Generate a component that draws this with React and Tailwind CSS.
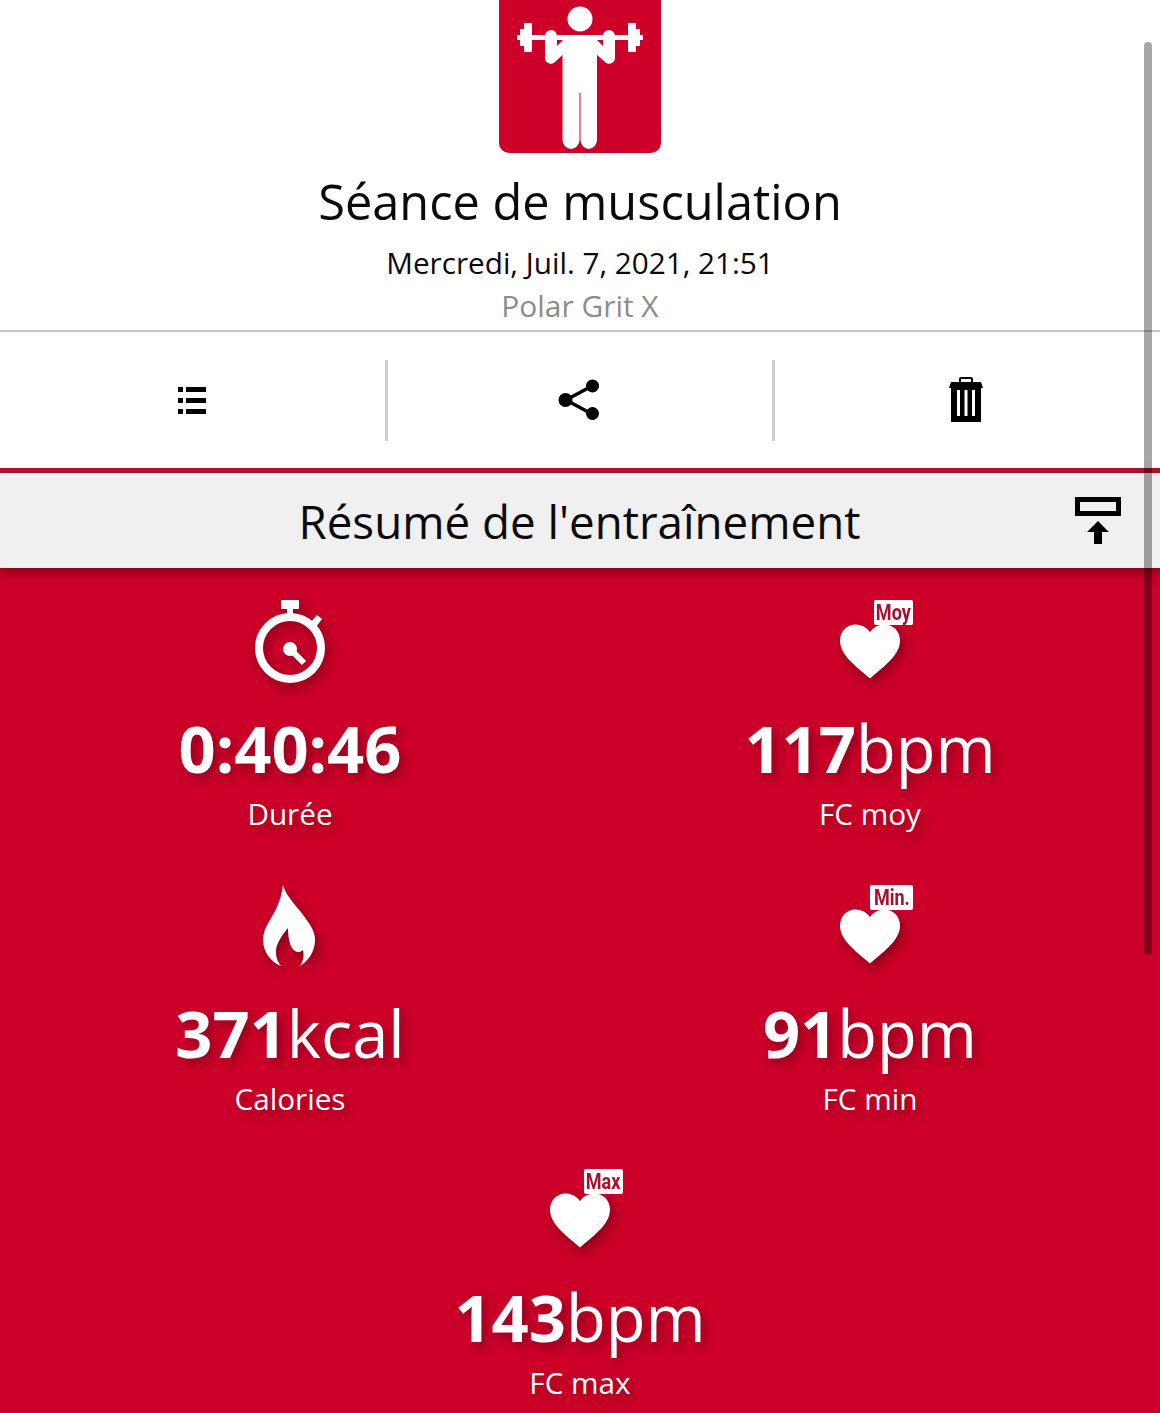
const FONT = "font-['Open_Sans',sans-serif]";

function LifterIcon() {
  return (
    <svg viewBox="0 0 162 153" className="block w-[162px] h-[153px]">
      <path
        d="M0 0H162V143a10 10 0 0 1-10 10H10a10 10 0 0 1-10-10Z"
        fill="#cc0029"
      />
      <g fill="#fff">
        <circle cx="81" cy="19" r="12.5" />
        <rect x="18" y="35" width="126" height="5" />
        <rect x="21" y="29" width="5" height="17" />
        <rect x="25" y="23" width="8" height="29" rx="1" />
        <rect x="136" y="29" width="5" height="17" />
        <rect x="129" y="23" width="8" height="29" rx="1" />
        <path d="M46 36a6 6 0 0 1 12 0V46L65 39H97L104 46V36a6 6 0 0 1 12 0V58a6 6 0 0 1-11 3L98 55V140a9 9 0 0 1-8.5 9 9 9 0 0 1-8-9V93H80.5V140a9 9 0 0 1-8.5 9 9 9 0 0 1-8.5-9V55L57 61a6 6 0 0 1-11-3Z" />
      </g>
    </svg>
  );
}

function ListIcon() {
  return (
    <svg viewBox="0 0 28 28" className="w-[28px] h-[28px] mr-[1px]">
      <path d="M0 0h5v5H0zM8 0h20v5H8zM0 11h5v5H0zM8 11h20v5H8zM0 22h5v5H0zM8 22h20v5H8z" fill="#000" />
    </svg>
  );
}

function ShareIcon() {
  return (
    <svg viewBox="0 0 42 42" className="w-[42px] h-[42px] mr-[2px] mb-[2px]">
      <path d="M8 21 34 7M8 21l26 14" stroke="#000" strokeWidth="3.5" fill="none" />
      <circle cx="7.5" cy="21" r="7" />
      <circle cx="34.5" cy="7" r="6.5" />
      <circle cx="34.5" cy="34.5" r="6.5" />
    </svg>
  );
}

function TrashIcon() {
  return (
    <svg viewBox="0 0 34 46" className="w-[34px] h-[46px] mb-[4px] mr-[3px]">
      <path
        fillRule="evenodd"
        d="M10 6V3a2 2 0 0 1 2-2h10a2 2 0 0 1 2 2v3h8l2 6H32v34H2V12H0l2-6ZM12 3v3h10V3ZM8 14v26h3V14Zm7.5 0v26h3V14Zm7.5 0v26h3V14Z"
        fill="#000"
      />
    </svg>
  );
}

function CollapseIcon() {
  return (
    <svg viewBox="0 0 46 47" className="w-[46px] h-[47px]">
      <rect x="2.5" y="2.5" width="41" height="14" fill="none" stroke="#000" strokeWidth="5" />
      <path d="M23 24 34 35H27V47H19V35H12Z" fill="#000" />
    </svg>
  );
}

function StopwatchIcon() {
  return (
    <svg viewBox="0 0 72 84" className="w-[72px] h-[84px] drop-shadow-[3px_5px_6px_rgba(80,0,10,0.55)]">
      <path d="M27 0h18v9h-6v8h-6V9h-6z" fill="#fff" />
      <path d="M57 22l6-7 5 4-6 8z" fill="#fff" />
      <circle cx="36" cy="48" r="31" fill="none" stroke="#fff" strokeWidth="8" />
      <circle cx="36" cy="49" r="7" fill="#fff" />
      <path d="M36 49 50 63" stroke="#fff" strokeWidth="6" />
    </svg>
  );
}

function FlameIcon() {
  return (
    <svg viewBox="0 0 54 82" className="w-[54px] h-[82px] mr-[2px] drop-shadow-[3px_5px_6px_rgba(80,0,10,0.55)]">
      <path
        d="M21 0C24 12 36 22 44 34C50 42 53 48 53 55C53 67 46 76 38 81C42 75 42 70 41 65C38 68 33 68 30 63C27 58 26 50 26 43C20 50 13 60 14 68C14 73 16 77 19 81C9 77 1 67 1 55C1 42 11 32 15 22C18 15 20 8 21 0Z"
        fill="#fff"
      />
    </svg>
  );
}

function HeartIcon({ tag, tagWidth }) {
  return (
    <div className="relative w-[92px] h-[84px]">
      <svg viewBox="0 0 62 56" className="absolute left-[16px] top-[23px] w-[60px] h-[57px] drop-shadow-[3px_5px_6px_rgba(80,0,10,0.55)]">
        <path
          d="M31 56C20 46 0 33 0 17 0 7 7 0 16 0c6 0 12 3 15 8 3-5 9-8 15-8 9 0 16 7 16 17 0 16-20 29-31 39Z"
          fill="#fff"
        />
      </svg>
      <span
        style={{ width: tagWidth }}
        className="absolute right-[3px] top-0 h-[25px] bg-white rounded-[2px] flex justify-center [text-shadow:none] font-['Roboto',sans-serif] font-bold text-[22px] leading-[25px] text-[#a80f2c]"
      >
        <span className="block scale-x-[0.82] whitespace-nowrap">{tag}</span>
      </span>
    </div>
  );
}

function Stat({ icon, value, unit, label }) {
  return (
    <div className="flex flex-col items-center h-[284.5px] pt-[32px] text-white [text-shadow:4px_5px_10px_rgba(90,0,15,0.5)]">
      <div className="h-[84px] flex items-start justify-center">{icon}</div>
      <p className="mt-[26px] text-[65px] leading-[76px] whitespace-nowrap">
        <span className="font-bold">{value}</span>
        {unit}
      </p>
      <p className="mt-[9px] text-[29.7px] leading-[38px]">{label}</p>
    </div>
  );
}

export default function App() {
  return (
    <div className={`relative w-[1160px] h-[1413px] overflow-hidden bg-[#cc0029] ${FONT}`}>
      {/* Header */}
      <div className="bg-white flex flex-col items-center h-[330px]">
        <LifterIcon />
        <h1 className="mt-[16px] text-[48.7px] leading-[64px] text-[#0a0a0a]">Séance de musculation</h1>
        <p className="mt-[10px] text-[29.7px] leading-[40px] text-[#0a0a0a]">Mercredi, Juil. 7, 2021, 21:51</p>
        <p className="mt-[3px] text-[29.9px] leading-[40px] text-[#8c8c8c]">Polar Grit X</p>
      </div>

      {/* Toolbar */}
      <div className="bg-white h-[143px] border-t-2 border-b-[5px] border-t-[#c8c8c8] border-b-[#b0142e] grid grid-cols-[385px_390px_385px] pt-[28px]">
        <div className="h-[81px] flex items-center justify-center">
          <ListIcon />
        </div>
        <div className="h-[81px] flex items-center justify-center border-x-[3px] border-[#cfcfcf]">
          <ShareIcon />
        </div>
        <div className="h-[81px] flex items-center justify-center">
          <TrashIcon />
        </div>
      </div>

      {/* Section title */}
      <div className="relative h-[95px] bg-[#f0f0f0] flex items-center justify-center shadow-[0_4px_10px_rgba(80,0,10,0.6)]">
        <h2 className="text-[45.7px] leading-[64px] text-[#0a0a0a] mr-[1px]">Résumé de l'entraînement</h2>
        <div className="absolute right-[39px] top-[24px]">
          <CollapseIcon />
        </div>
      </div>

      {/* Stats */}
      <div className="grid grid-cols-2">
        <Stat icon={<StopwatchIcon />} value="0:40:46" label="Durée" />
        <Stat icon={<HeartIcon tag="Moy" tagWidth={39} />} value="117" unit="bpm" label="FC moy" />
        <Stat icon={<FlameIcon />} value="371" unit="kcal" label="Calories" />
        <Stat icon={<HeartIcon tag="Min." tagWidth={43} />} value="91" unit="bpm" label="FC min" />
        <div className="col-span-2">
          <Stat icon={<HeartIcon tag="Max" tagWidth={39} />} value="143" unit="bpm" label="FC max" />
        </div>
      </div>

      {/* Scrollbar */}
      <div className="absolute right-[8px] top-[42px] w-[8px] h-[913px] rounded-full bg-black/35" />
    </div>
  );
}
